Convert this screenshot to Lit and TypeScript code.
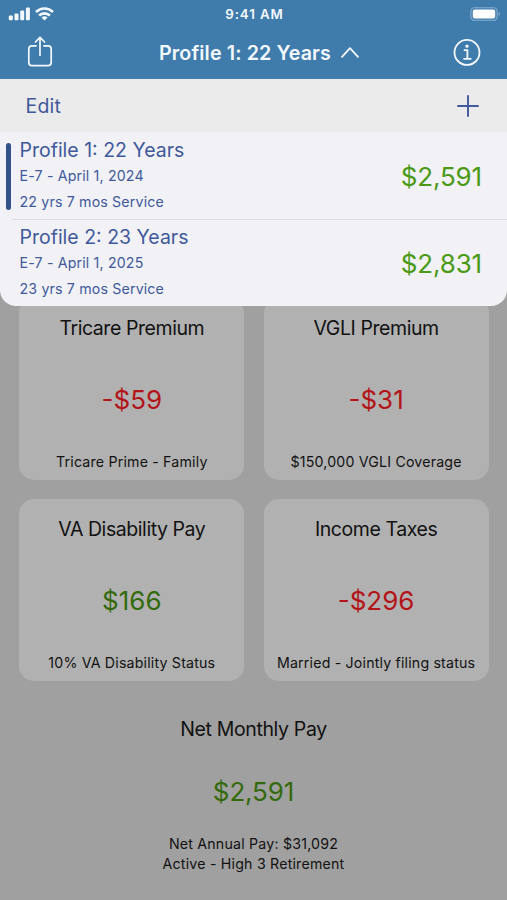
import { LitElement, html, css } from "lit";
import { customElement, property } from "lit/decorators.js";
import { classMap } from "lit/directives/class-map.js";

@customElement("status-bar")
class StatusBar extends LitElement {
  static styles = css`
    :host { display: grid; grid-template-columns: 1fr auto 1fr; align-items: center; height: 27px; padding: 0 6px 0 8px; box-sizing: border-box; color: #f3f8fc; }
    .left { display: flex; align-items: center; gap: 5px; }
    .time { font-size: 13.3px; font-weight: 600; letter-spacing: 0.9px; line-height: 16px; }
    .battery { justify-self: end; display: block; }
    svg { display: block; }
  `;
  render() {
    return html`
      <div class="left">
        <svg width="22" height="14" viewBox="0 0 22 14" fill="currentColor">
          <rect x="0.8" y="8.6" width="4" height="4.6" rx="1" />
          <rect x="6.5" y="6.4" width="4" height="6.8" rx="1" />
          <rect x="12.2" y="3.4" width="4" height="9.8" rx="1" />
          <rect x="17.9" y="0.4" width="4" height="12.8" rx="1" />
        </svg>
        <svg width="19" height="14" viewBox="0 0 19 14" fill="none" stroke="currentColor" stroke-width="2.6">
          <path d="M1 5 A12.2 12.2 0 0 1 18 5" />
          <path d="M4.1 8.5 A7.8 7.8 0 0 1 14.9 8.5" />
          <path d="M9.5 13.6 L6.5 10.6 A4.3 4.3 0 0 1 12.5 10.6 Z" fill="currentColor" stroke="none" />
        </svg>
      </div>
      <div class="time">9:41 AM</div>
      <svg class="battery" width="31" height="14" viewBox="0 0 31 14">
        <rect x="0.9" y="0.7" width="26.2" height="12.6" rx="3.6" fill="none" stroke="#84afd0" stroke-width="1.1" />
        <rect x="2.8" y="2.5" width="22.4" height="9" rx="2" fill="#fff" />
        <path d="M28.6 4.8 Q31.4 7 28.6 9.2 Z" fill="#84afd0" />
      </svg>
    `;
  }
}

@customElement("profile-row")
class ProfileRow extends LitElement {
  @property() name = "";
  @property() grade = "";
  @property() service = "";
  @property() pay = "";
  @property({ type: Boolean }) selected = false;

  static styles = css`
    :host { display: flex; align-items: center; height: 87px; box-sizing: border-box; padding: 1px 25px 0 6px; color: #40599a; }
    .marker { width: 5px; height: 67px; border-radius: 2.5px; margin-right: 8.5px; }
    .marker.on { background: #34528a; }
    .info { flex: 1; display: flex; flex-direction: column; padding-top: 0.4px; }
    .name { font-size: 19.5px; line-height: 26px; }
    .line { font-size: 14.2px; line-height: 26px; letter-spacing: 0.16px; }
    .pay { font-size: 26px; line-height: 32px; padding-top: 1.6px; letter-spacing: -0.15px; color: #4b9a16; }
  `;
  render() {
    return html`
      <div class=${classMap({ marker: true, on: this.selected })}></div>
      <div class="info">
        <div class="name">${this.name}</div>
        <div class="line">${this.grade}</div>
        <div class="line">${this.service}</div>
      </div>
      <div class="pay">${this.pay}</div>
    `;
  }
}

@customElement("pay-card")
class PayCard extends LitElement {
  @property() heading = "";
  @property() amount = "";
  @property() note = "";

  static styles = css`
    :host { display: flex; flex-direction: column; align-items: center; box-sizing: border-box; height: 182.3px; padding-top: 16px; border-radius: 15px; background: #b1b1b1; color: #111; white-space: nowrap; }
    .heading { font-size: 19.5px; line-height: 28px; letter-spacing: -0.43px; }
    .amount { font-size: 26px; line-height: 34px; letter-spacing: 0; color: #346a0c; margin: 41px 0 34.6px; }
    .amount.negative { color: #b31418; }
    .note { font-size: 14.2px; line-height: 20px; letter-spacing: 0.18px; }
  `;
  render() {
    return html`
      <div class="heading">${this.heading}</div>
      <div class=${classMap({ amount: true, negative: this.amount.startsWith("-") })}>${this.amount}</div>
      <div class="note">${this.note}</div>
    `;
  }
}

@customElement("app-root")
class AppRoot extends LitElement {
  private profiles = [
    { name: "Profile 1: 22 Years", grade: "E-7 - April 1, 2024", service: "22 yrs 7 mos Service", pay: "$2,591" },
    { name: "Profile 2: 23 Years", grade: "E-7 - April 1, 2025", service: "23 yrs 7 mos Service", pay: "$2,831" },
  ];
  private cards = [
    { heading: "Tricare Premium", amount: "-$59", note: "Tricare Prime - Family" },
    { heading: "VGLI Premium", amount: "-$31", note: "$150,000 VGLI Coverage" },
    { heading: "VA Disability Pay", amount: "$166", note: "10% VA Disability Status" },
    { heading: "Income Taxes", amount: "-$296", note: "Married - Jointly filing status" },
  ];

  static styles = css`
    :host { display: flex; flex-direction: column; position: relative; width: 507px; height: 900px; overflow: hidden; background: #a0a0a0; font-family: Inter, "Liberation Sans", sans-serif; }
    .top { height: 79px; flex: none; background: #407cab; color: #f3f8fc; }
    .nav { display: grid; grid-template-columns: 1fr auto 1fr; align-items: center; height: 50px; padding: 0 26px 0 27px; }
    .nav svg { display: block; }
    .title { display: flex; align-items: center; gap: 10px; margin-left: 10px; font-size: 19.7px; font-weight: 600; letter-spacing: 0.12px; line-height: 26px; }
    .title span { padding-top: 1.4px; }
    .info { justify-self: end; }
    .menu { position: absolute; left: 0; right: 0; top: 79px; height: 227px; border-radius: 0 0 16px 16px; background: #f1f1f6; overflow: hidden; }
    .tools { display: flex; align-items: center; justify-content: space-between; height: 53px; padding: 0 28px 0 25.5px; background: #ebebeb; color: #40599a; font-size: 19.5px; box-sizing: border-box; letter-spacing: 0.2px; }
    .divider { height: 1px; margin: 0 0 -1px 12px; background: #dcdce1; }
    .cards { display: grid; grid-template-columns: 225px 225px; gap: 18.7px 19.3px; padding: 219px 0 0 19.3px; }
    .net { display: flex; flex-direction: column; align-items: center; padding-top: 34px; color: #111; }
    .net-title { font-size: 19.5px; line-height: 28px; letter-spacing: -0.36px; }
    .net-pay { font-size: 26px; line-height: 34px; letter-spacing: -0.15px; color: #346a0c; margin: 31.6px 0 25.4px; }
    .net-line { font-size: 14.2px; line-height: 19.3px; letter-spacing: 0.2px; }
  `;

  render() {
    const [first, second] = this.profiles;
    const row = (p: typeof first, selected: boolean) => html`
      <profile-row .name=${p.name} .grade=${p.grade} .service=${p.service} .pay=${p.pay} .selected=${selected}></profile-row>
    `;
    return html`
      <header class="top">
        <status-bar></status-bar>
        <div class="nav">
          <svg width="26" height="32" viewBox="0 0 26 32" fill="none" stroke="currentColor" stroke-width="1.7" stroke-linecap="round" stroke-linejoin="round">
            <path d="M9 9.9 H5 Q1.8 9.9 1.8 13.1 V26.4 Q1.8 29.6 5 29.6 H21 Q24.2 29.6 24.2 26.4 V13.1 Q24.2 9.9 21 9.9 H17" />
            <path d="M13 19.2 V1.6 M8.4 6 L13 1.4 L17.6 6" />
          </svg>
          <div class="title">
            <span>Profile 1: 22 Years</span>
            <svg width="18" height="12" viewBox="0 0 18 12" fill="none" stroke="currentColor" stroke-width="1.8" stroke-linecap="round" stroke-linejoin="round">
              <path d="M1 10.8 L9 2.2 L17 10.8" />
            </svg>
          </div>
          <svg class="info" width="28" height="28" viewBox="0 0 28 28" fill="none" stroke="currentColor" stroke-width="1.8" stroke-linecap="round">
            <circle cx="14" cy="14.4" r="12.5" />
            <path d="M11.5 12.2 H14.4 V20.6 M11 20.8 H17.8" stroke-linejoin="round" />
            <circle cx="14" cy="8.2" r="1.6" fill="currentColor" stroke="none" />
          </svg>
        </div>
      </header>
      <main>
        <section class="cards">
          ${this.cards.map((c) => html`<pay-card .heading=${c.heading} .amount=${c.amount} .note=${c.note}></pay-card>`)}
        </section>
        <section class="net">
          <div class="net-title">Net Monthly Pay</div>
          <div class="net-pay">$2,591</div>
          <div class="net-line">Net Annual Pay: $31,092</div>
          <div class="net-line">Active - High 3 Retirement</div>
        </section>
      </main>
      <div class="menu">
        <div class="tools">
          <span>Edit</span>
          <svg width="22" height="22" viewBox="0 0 22 22" fill="none" stroke="currentColor" stroke-width="1.9" stroke-linecap="round">
            <path d="M11 1 V21 M1 11 H21" />
          </svg>
        </div>
        ${row(first, true)}
        <div class="divider"></div>
        ${row(second, false)}
      </div>
    `;
  }
}
